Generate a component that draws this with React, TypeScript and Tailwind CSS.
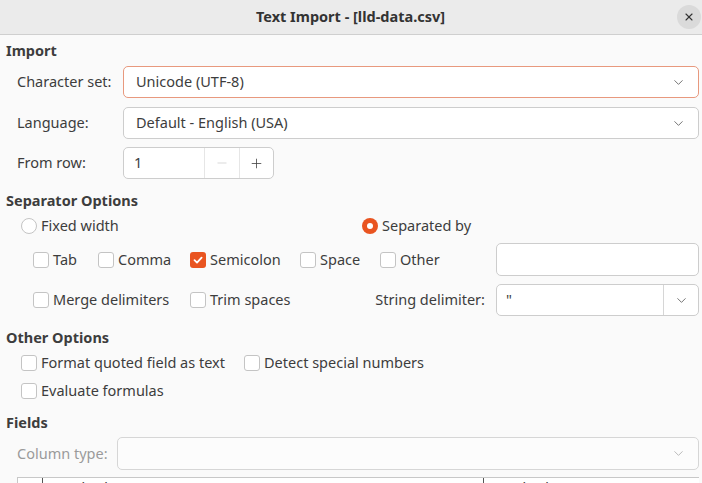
import { ChevronDown, Minus, Plus, X } from 'lucide-react';

function Checkbox({ checked = false, label }: { checked?: boolean; label: string }) {
  return (
    <div className="flex items-center gap-[4px]">
      {checked ? (
        <span className="flex h-[16px] w-[16px] items-center justify-center rounded-[3px] bg-[#e95420]">
          <svg width="12" height="12" viewBox="0 0 12 12">
            <path d="M2.5 6.2 L5 8.6 L9.6 3.6" fill="none" stroke="white" strokeWidth="1.8" strokeLinecap="round" strokeLinejoin="round" />
          </svg>
        </span>
      ) : (
        <span className="h-[16px] w-[16px] rounded-[3px] border border-[#c4c4c4] bg-white"></span>
      )}
      <span>{label}</span>
    </div>
  );
}

function Radio({ checked = false, label }: { checked?: boolean; label: string }) {
  return (
    <div className="flex items-center gap-[4px]">
      {checked ? (
        <span className="flex h-[16px] w-[16px] items-center justify-center rounded-full bg-[#e95420]">
          <span className="h-[6px] w-[6px] rounded-full bg-white"></span>
        </span>
      ) : (
        <span className="h-[16px] w-[16px] rounded-full border border-[#c4c4c4] bg-white"></span>
      )}
      <span>{label}</span>
    </div>
  );
}

function Heading({ children, className = '' }: { children: string; className?: string }) {
  return <div className={`flex h-[22px] items-center font-bold ${className}`}>{children}</div>;
}

export default function App() {
  return (
    <div
      className="h-[483px] w-[702px] overflow-hidden bg-[#fafafa] text-[14.5px] text-[#3d3d3d]"
      style={{ fontFamily: '"Noto Sans", "Open Sans", sans-serif' }}
    >
      {/* Title bar */}
      <div className="flex h-[35px] items-center border-b border-[#cfcfcf] bg-[#ebebeb] pr-[1px]">
        <div className="flex-1"></div>
        <span className="font-bold text-[#333]">Text Import - [lld-data.csv]</span>
        <div className="flex flex-1 justify-end">
          <button className="flex h-[24px] w-[24px] items-center justify-center rounded-full bg-[#dadada] text-[#333]">
            <X size={12} strokeWidth={2.2} />
          </button>
        </div>
      </div>

      <div className="pl-[6px] pr-[3px]">
        {/* Import */}
        <Heading className="mt-[5px]">Import</Heading>
        <div className="mt-[4px] flex h-[32px] items-center">
          <span className="w-[117px] pl-[11px]">Character set:</span>
          <div className="flex h-full flex-1 items-center rounded-[5px] border border-[#e8997e] bg-white pl-[12px] pr-[12px]">
            <span>Unicode (UTF-8)</span>
            <ChevronDown size={15} strokeWidth={1.3} className="ml-auto text-[#555]" />
          </div>
        </div>
        <div className="mt-[9px] flex h-[32px] items-center">
          <span className="w-[117px] pl-[11px]">Language:</span>
          <div className="flex h-full flex-1 items-center rounded-[5px] border border-[#cdcdcd] bg-white pl-[12px] pr-[12px]">
            <span>Default - English (USA)</span>
            <ChevronDown size={15} strokeWidth={1.3} className="ml-auto text-[#555]" />
          </div>
        </div>
        <div className="mt-[8px] flex h-[32px] items-center">
          <span className="w-[117px] pl-[11px]">From row:</span>
          <div className="flex h-full w-[151px] items-center rounded-[5px] border border-[#cdcdcd] bg-white">
            <span className="w-[80px] pl-[10px]">1</span>
            <span className="flex h-full w-[35px] items-center justify-center border-l border-[#e6e6e6] text-[#c8c8c8]">
              <Minus size={14} strokeWidth={1.2} />
            </span>
            <span className="flex h-full flex-1 items-center justify-center border-l border-[#e6e6e6] text-[#444]">
              <Plus size={15} strokeWidth={1.3} />
            </span>
          </div>
        </div>

        {/* Separator Options */}
        <Heading className="mt-[11px]">Separator Options</Heading>
        <div className="mt-[4px] flex h-[20px] items-center pl-[15px]">
          <div className="w-[341px]">
            <Radio label="Fixed width" />
          </div>
          <Radio checked label="Separated by" />
        </div>
        <div className="mt-[7px] flex h-[33px] items-center pl-[27px]">
          <div className="w-[65px]">
            <Checkbox label="Tab" />
          </div>
          <div className="w-[92px]">
            <Checkbox label="Comma" />
          </div>
          <div className="w-[110px]">
            <Checkbox checked label="Semicolon" />
          </div>
          <div className="w-[80px]">
            <Checkbox label="Space" />
          </div>
          <Checkbox label="Other" />
          <div className="ml-auto h-full w-[203px] rounded-[5px] border border-[#cdcdcd] bg-white"></div>
        </div>
        <div className="mt-[8px] flex h-[32px] items-center pl-[27px]">
          <div className="w-[157px]">
            <Checkbox label="Merge delimiters" />
          </div>
          <Checkbox label="Trim spaces" />
          <span className="ml-auto mr-[11px]">String delimiter:</span>
          <div className="flex h-full w-[203px] items-center rounded-[5px] border border-[#cdcdcd] bg-white">
            <span className="flex-1 pl-[9px]">"</span>
            <span className="flex h-full w-[35px] items-center justify-center border-l border-[#d6d6d6] text-[#555]">
              <ChevronDown size={15} strokeWidth={1.3} />
            </span>
          </div>
        </div>

        {/* Other Options */}
        <Heading className="mt-[11px]">Other Options</Heading>
        <div className="mt-[4px] flex h-[20px] items-center pl-[15px]">
          <div className="w-[223px]">
            <Checkbox label="Format quoted field as text" />
          </div>
          <Checkbox label="Detect special numbers" />
        </div>
        <div className="mt-[8px] flex h-[20px] items-center pl-[15px]">
          <Checkbox label="Evaluate formulas" />
        </div>

        {/* Fields */}
        <Heading className="mt-[11px]">Fields</Heading>
        <div className="mt-[3px] flex h-[33px] items-center">
          <span className="w-[111px] pl-[11px] text-[#9a9a9a]">Column type:</span>
          <div className="flex h-full flex-1 items-center rounded-[5px] border border-[#d6d6d6] bg-[#fcfcfc] pr-[12px]">
            <ChevronDown size={15} strokeWidth={1.3} className="ml-auto text-[#aaa]" />
          </div>
        </div>
        <div className="mt-[7px] ml-[11px] flex h-[20px] border-t border-l border-[#c8c8c8] bg-white">
          <div className="w-[25px] border-r border-[#555]"></div>
          <div className="w-[441px] border-r border-[#555] pl-[3px] leading-[18px]">Standard</div>
          <div className="flex-1 pl-[3px] leading-[18px]">Standard</div>
        </div>
      </div>
    </div>
  );
}
